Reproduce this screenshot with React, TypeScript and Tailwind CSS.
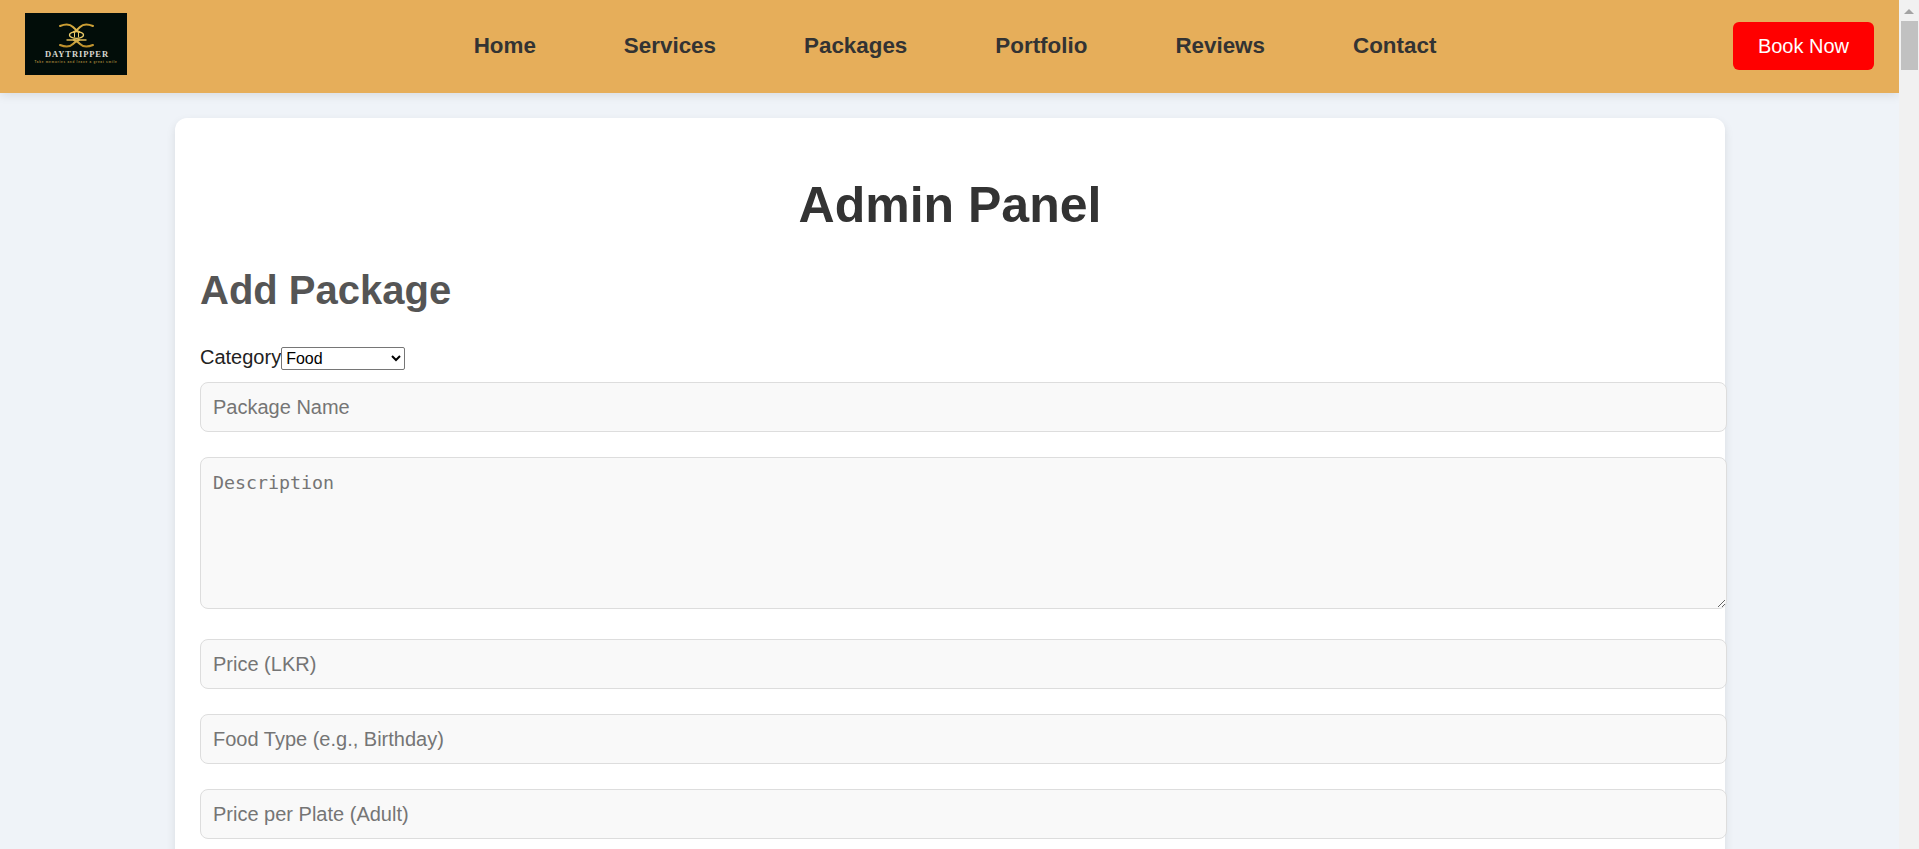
const navLinks = ['Home', 'Services', 'Packages', 'Portfolio', 'Reviews', 'Contact']

const inputClass =
  'mb-[25px] block h-[50px] w-[1527px] shrink-0 rounded-lg border border-[#dddddd] bg-[#f9f9f9] px-3 text-[20px] placeholder:text-[#757575]'

function Logo() {
  return (
    <svg width="102" height="62" viewBox="0 0 102 62" className="block">
      <defs>
        <linearGradient id="gold" x1="0" y1="11" x2="0" y2="34" gradientUnits="userSpaceOnUse">
          <stop offset="0" stopColor="#c99a2e" />
          <stop offset="0.5" stopColor="#f0d272" />
          <stop offset="1" stopColor="#b98a24" />
        </linearGradient>
      </defs>
      <rect width="102" height="62" fill="#020d09" />
      <g fill="none" stroke="url(#gold)" strokeLinecap="round">
        <path d="M35 13c5-2 10-2 13 1s4 4 6 5" strokeWidth="2" />
        <path d="M68 13c-5-2-10-2-13 1s-4 4-6 5" strokeWidth="2" />
        <path d="M35 32c5 2 10 2 13-1s4-3 6-4" strokeWidth="2" />
        <path d="M68 32c-5 2-10 2-13-1s-4-3-6-4" strokeWidth="2" />
        <ellipse cx="51.5" cy="22" rx="7" ry="3.4" strokeWidth="1.4" />
        <path d="M42 27h19" strokeWidth="1.4" />
        <path d="M49.5 20v4M53.5 20v4" strokeWidth="1" />
      </g>
      <text x="52" y="44" textAnchor="middle" fill="#d8d8d0" fontSize="8.5" fontWeight="700" fontFamily="'Liberation Serif', serif" letterSpacing="0.9">
        DAYTRIPPER
      </text>
      <text x="51" y="49.5" textAnchor="middle" fill="#a98a3c" fontSize="3" fontWeight="700" fontFamily="'Liberation Sans', sans-serif" letterSpacing="0.75">
        Take memories and leave a great smile
      </text>
    </svg>
  )
}

export default function App() {
  return (
    <div className="flex h-[849px] overflow-hidden bg-[#eff3f8] font-['Liberation_Sans',Arial,sans-serif]">
      <div className="min-w-0 flex-1 overflow-hidden">
        <header className="flex h-[93px] items-center justify-between bg-[#e6ae5a] px-[25px] shadow-[0_2px_10px_rgba(0,0,0,0.1)]">
          <div className="mb-[5px]">
            <Logo />
          </div>
          <nav className="mb-[2px] flex items-center gap-[88px] pl-[50px]">
            {navLinks.map((link) => (
              <a key={link} className="text-[22.4px] font-bold text-[#333333]">
                {link}
              </a>
            ))}
          </nav>
          <button className="mb-[1px] h-12 w-[141px] rounded-md bg-[#ff0000] text-[20px] text-white">Book Now</button>
        </header>

        <main className="ml-[175px] mt-[25px] h-[900px] w-[1550px] rounded-xl bg-white p-[25px] shadow-[0_4px_10px_rgba(0,0,0,0.1)]">
          <h1 className="mt-[33px] text-center text-[50px] font-bold leading-[58px] text-[#333333]">Admin Panel</h1>
          <h2 className="mt-[33px] text-[40px] font-bold leading-[46px] text-[#555555]">Add Package</h2>

          <div className="mt-[33px] flex h-[22px] items-center text-[20px] text-[#222222]">
            <label>Category</label>
            <select className="mt-[2px] h-[23px] w-[124px] rounded-[2px] border border-[#767676] bg-white text-[16px] text-black">
              <option>Food</option>
            </select>
          </div>

          <input placeholder="Package Name" className={`${inputClass} mt-[14px]`} />
          <textarea
            placeholder="Description"
            className="mb-[30px] block h-[152px] w-[1527px] rounded-lg border border-[#dddddd] bg-[#f9f9f9] px-3 py-[11px] font-['DejaVu_Sans_Mono',monospace] text-[18.3px] placeholder:text-[#757575]"
          />
          <input placeholder="Price (LKR)" className={inputClass} />
          <input placeholder="Food Type (e.g., Birthday)" className={inputClass} />
          <input placeholder="Price per Plate (Adult)" className={inputClass} />
        </main>
      </div>

      <div className="flex w-5 shrink-0 flex-col items-center bg-[#f1f1f1]">
        <div className="mt-[9px] h-0 w-0 border-x-[5px] border-b-[5px] border-x-transparent border-b-[#a3a3a3]" />
        <div className="mt-[7px] h-[49px] w-[17px] bg-[#c1c1c1]" />
      </div>
    </div>
  )
}
